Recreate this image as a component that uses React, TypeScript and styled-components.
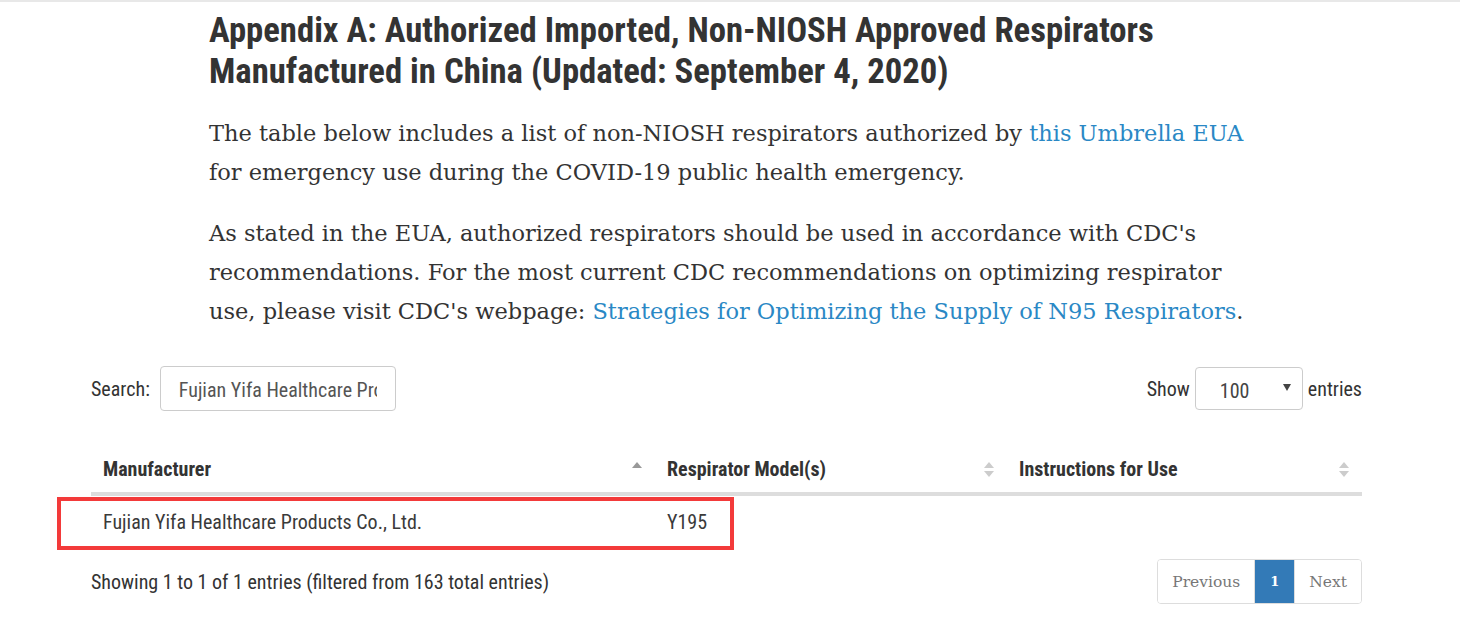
import React from 'react'
import styled, { createGlobalStyle } from 'styled-components'

const GlobalStyle = createGlobalStyle`
  html, body {
    margin: 0;
    padding: 0;
    background: #fff;
  }
  body {
    font-family: 'Roboto Condensed', 'Liberation Sans Narrow', 'DejaVu Sans Condensed', sans-serif;
    color: #333;
  }
`

const Page = styled.div`
  position: relative;
  border-top: 2px solid #e8e8e8;
  padding: 8px 98px 0 91px;
`

const Article = styled.div`
  padding-left: 118px;
  width: 1045px;
`

const Heading = styled.h2`
  margin: 0 0 22px;
  font-family: 'Roboto Condensed', 'Liberation Sans Narrow', sans-serif;
  font-size: 34.7px;
  font-weight: 700;
  line-height: 41px;
  color: #333;
`

const Para = styled.p`
  margin: 0 0 22px;
  font-family: 'DejaVu Serif', 'Liberation Serif', serif;
  font-size: 22.5px;
  line-height: 39px;
  color: #333;
`

const Link = styled.a`
  color: #2a88c5;
  text-decoration: none;
`

const Controls = styled.div`
  display: flex;
  justify-content: space-between;
  align-items: center;
  margin-top: 35px;
  font-size: 20px;
  color: #333;
`

const Label = styled.label`
  display: flex;
  align-items: center;
  gap: 10px;
`

const ShowGroup = styled.div`
  display: flex;
  align-items: center;
  gap: 5px;
`

const SearchInput = styled.input`
  width: 236px;
  height: 45px;
  box-sizing: border-box;
  border: 1px solid #ccc;
  border-radius: 4px;
  padding: 2px 18px 0;
  font-family: inherit;
  font-size: 20px;
  color: #555;
  outline: 0;
`

const SelectBox = styled.div`
  position: relative;
  width: 108px;
  height: 43px;
  box-sizing: border-box;
  border: 1px solid #ccc;
  border-radius: 4px;
  display: flex;
  align-items: center;
  padding: 4px 0 0 24px;
  font-size: 20px;
  color: #444;
`

const Caret = styled.span`
  position: absolute;
  right: 11px;
  top: 16px;
  width: 0;
  height: 0;
  border-left: 4px solid transparent;
  border-right: 4px solid transparent;
  border-top: 7px solid #444;
`

const Table = styled.table`
  width: 100%;
  table-layout: fixed;
  margin-top: 35px;
  border-collapse: collapse;
  font-size: 20px;
`

const Th = styled.th<{ $w: number }>`
  box-sizing: border-box;
  width: ${(p) => p.$w}px;
  text-align: left;
  padding: 0 12px;
  height: 48px;
  font-weight: 700;
  border-bottom: 4px solid #ddd;
  position: relative;
`

const SortIcon = styled.svg`
  position: absolute;
  right: 12px;
  top: 15px;
`

const Td = styled.td`
  padding: 0 12px;
  height: 52px;
  color: #3a3a3a;
`

const Footer = styled.div`
  display: flex;
  justify-content: space-between;
  align-items: center;
  margin-top: 11px;
  font-size: 20px;
`

const Pager = styled.div`
  display: flex;
  border: 1px solid #ddd;
  border-radius: 4px;
  overflow: hidden;
  height: 43px;
`

const PageBtn = styled.span<{ $active?: boolean }>`
  display: flex;
  align-items: center;
  justify-content: center;
  padding: 0 ${(p) => (p.$active ? '15px' : '14px')};
  font-family: 'DejaVu Serif', 'Liberation Serif', serif;
  font-size: ${(p) => (p.$active ? '13px' : '15.5px')};
  font-weight: ${(p) => (p.$active ? 700 : 400)};
  background: ${(p) => (p.$active ? '#337ab7' : '#fff')};
  color: ${(p) => (p.$active ? '#fff' : '#777')};
  & + & {
    border-left: 1px solid #ddd;
  }
`

const Highlight = styled.div`
  position: absolute;
  left: 57px;
  top: 495px;
  width: 677px;
  height: 53px;
  box-sizing: border-box;
  border: 4px solid #f33a3a;
  pointer-events: none;
`

function Sort({ up, both }: { up?: boolean; both?: boolean }) {
  return (
    <SortIcon width="12" height="18" viewBox="0 0 12 18">
      {both ? (
        <>
          <polygon points="1,7 11,7 6,1" fill="#ccc" />
          <polygon points="1,10 11,10 6,16" fill="#ccc" />
        </>
      ) : up ? (
        <polygon points="1,7 11,7 6,1" fill="#999" />
      ) : null}
    </SortIcon>
  )
}

export default function App() {
  return (
    <Page>
      <GlobalStyle />
      <Article>
        <Heading>
          Appendix A: Authorized Imported, Non-NIOSH Approved Respirators Manufactured in China
          (Updated: September 4, 2020)
        </Heading>
        <Para>
          The table below includes a list of non-NIOSH respirators authorized by{' '}
          <Link href="#">this Umbrella EUA</Link> for emergency use during the COVID-19 public
          health emergency.
        </Para>
        <Para>
          As stated in the EUA, authorized respirators should be used in accordance with CDC's
          recommendations. For the most current CDC recommendations on optimizing respirator use,
          please visit CDC's webpage:{' '}
          <Link href="#">Strategies for Optimizing the Supply of N95 Respirators</Link>.
        </Para>
      </Article>
      <Controls>
        <Label>
          Search:
          <SearchInput defaultValue="Fujian Yifa Healthcare Products Co., Ltd." />
        </Label>
        <ShowGroup>
          Show
          <SelectBox>
            100
            <Caret />
          </SelectBox>
          entries
        </ShowGroup>
      </Controls>
      <Table>
        <thead>
          <tr>
            <Th $w={564}>
              Manufacturer
              <Sort up />
            </Th>
            <Th $w={352}>
              Respirator Model(s)
              <Sort both />
            </Th>
            <Th $w={355}>
              Instructions for Use
              <Sort both />
            </Th>
          </tr>
        </thead>
        <tbody>
          <tr>
            <Td>Fujian Yifa Healthcare Products Co., Ltd.</Td>
            <Td>Y195</Td>
            <Td />
          </tr>
        </tbody>
      </Table>
      <Footer>
        <span>Showing 1 to 1 of 1 entries (filtered from 163 total entries)</span>
        <Pager>
          <PageBtn>Previous</PageBtn>
          <PageBtn $active>1</PageBtn>
          <PageBtn>Next</PageBtn>
        </Pager>
      </Footer>
      <Highlight />
    </Page>
  )
}
